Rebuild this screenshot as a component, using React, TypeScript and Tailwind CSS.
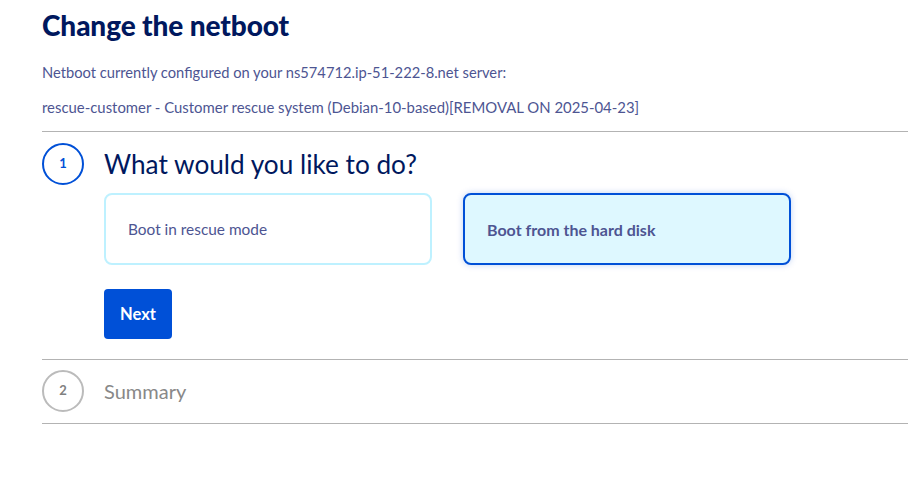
import { useState } from "react";

const font = { fontFamily: "Lato, 'Noto Sans', sans-serif" };

export default function App() {
  const [choice, setChoice] = useState("disk");

  const options = [
    { id: "rescue", label: "Boot in rescue mode" },
    { id: "disk", label: "Boot from the hard disk" },
  ];

  return (
    <main className="min-h-screen bg-white pl-[42px] pt-[8px]" style={font}>
      <h1 className="text-[28px] font-black leading-[34px] text-[#00185e] tracking-[-0.1px]">
        Change the netboot
      </h1>
      <p className="mt-[20px] text-[14.7px] leading-[20px] text-[#4d5592]">
        Netboot currently configured on your ns574712.ip-51-222-8.net server:
      </p>
      <p className="mt-[15px] text-[14.9px] leading-[20px] text-[#4d5592]">
        rescue-customer - Customer rescue system (Debian-10-based)[REMOVAL ON 2025-04-23]
      </p>

      {/* Step 1 */}
      <section className="mt-[14px] border-t border-[#b3b3b3] pt-[11px] pb-[20px]">
        <div className="flex items-center gap-[20px]">
          <div className="flex h-[42px] w-[42px] shrink-0 items-center justify-center rounded-full border-2 border-[#0050d7] text-[13px] font-bold text-[#0050d7]">
            1
          </div>
          <h2 className="text-[26.2px] leading-[32px] text-[#00185e]">What would you like to do?</h2>
        </div>
        <div className="ml-[62px] mt-[8px] flex gap-[31px]">
          {options.map((o) => {
            const active = choice === o.id;
            return (
              <button
                key={o.id}
                onClick={() => setChoice(o.id)}
                className={`flex h-[72px] w-[328px] items-center rounded-[8px] border-2 px-[22px] pt-[2px] text-left text-[#4d5592] ${
                  active
                    ? "border-[#0050d7] bg-[#def8ff] text-[16px] font-bold shadow-[0_0_6px_rgba(0,80,215,0.25)]"
                    : "border-[#bef1ff] bg-white text-[15.4px]"
                }`}
              >
                {o.label}
              </button>
            );
          })}
        </div>
        <button className="ml-[62px] mt-[24px] h-[50px] rounded-[4px] bg-[#0050d7] px-[16px] text-[16.5px] font-bold text-white">
          Next
        </button>
      </section>

      {/* Step 2 */}
      <section className="flex h-[65px] items-center gap-[20px] border-y border-[#b3b3b3] pb-[2px]">
        <div className="flex h-[42px] w-[42px] shrink-0 items-center justify-center rounded-full border-2 border-[#bbbbbb] text-[13px] font-bold text-[#808080]">
          2
        </div>
        <h2 className="text-[20px] leading-[24px] text-[#888888]">Summary</h2>
      </section>
    </main>
  );
}
